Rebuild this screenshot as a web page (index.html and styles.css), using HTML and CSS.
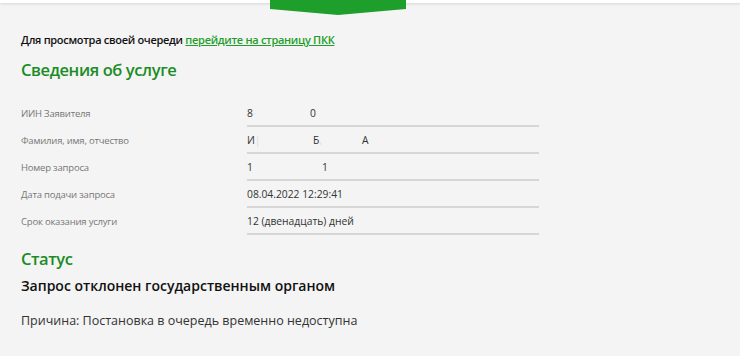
FILE: index.html
```html
<!DOCTYPE html>
<html lang="ru">
<head>
  <meta charset="UTF-8">
  <title>Сведения об услуге</title>
  <link rel="stylesheet" href="styles.css">
</head>
<body>

  <div class="top-bar">
    <div class="top-tab"></div>
  </div>

  <div class="content">
    <p class="queue-note">Для просмотра своей очереди <a href="#">перейдите на страницу ПКК</a></p>

    <h2>Сведения об услуге</h2>

    <div class="info-table">
      <div class="info-row">
        <div class="info-label">ИИН Заявителя</div>
        <div class="info-value"><span class="part w63">8<span class="mask">·</span></span><span>0</span></div>
      </div>
      <div class="info-row">
        <div class="info-label">Фамилия, имя, отчество</div>
        <div class="info-value"><span class="part w66">И<span class="mask">|</span></span><span class="part w49">Б<span class="mask">,</span></span><span>А</span></div>
      </div>
      <div class="info-row">
        <div class="info-label">Номер запроса</div>
        <div class="info-value"><span class="part w75">1</span><span>1</span></div>
      </div>
      <div class="info-row">
        <div class="info-label">Дата подачи запроса</div>
        <div class="info-value">08.04.2022 12:29:41</div>
      </div>
      <div class="info-row">
        <div class="info-label">Срок оказания услуги</div>
        <div class="info-value">12 (двенадцать) дней</div>
      </div>
    </div>

    <h2 class="status-title">Статус</h2>
    <p class="status-text">Запрос отклонен государственным органом</p>
    <p class="reason">Причина: Постановка в очередь временно недоступна</p>
  </div>

</body>
</html>
```

FILE: styles.css
```css
* {
  box-sizing: border-box;
}

body {
  background-color: #f4f4f4;
  font-family: 'Open Sans', 'Noto Sans', sans-serif;
  margin: 0;
  padding: 0;
  color: #222;
}

.top-bar {
  height: 3px;
  background-color: #fff;
  box-shadow: 0 1px 3px rgba(0, 0, 0, 0.12);
  position: relative;
}

.top-tab {
  position: absolute;
  top: 0;
  left: 270px;
  width: 136px;
  height: 15px;
  background-color: #1e9e2a;
  clip-path: polygon(0 0, 100% 0, 100% 60%, 50% 100%, 0 60%);
}

.content {
  padding: 29px 21px 0;
}

.queue-note {
  margin: 0;
  font-size: 11px;
  font-weight: 600;
  letter-spacing: -0.3px;
  color: #111;
}

.queue-note a {
  color: #1e9e2a;
}

h2 {
  margin: 11px 0 0;
  font-size: 16.5px;
  font-weight: 600;
  letter-spacing: -0.4px;
  color: #1a8c25;
}

.info-table {
  margin-top: 19px;
  width: 518px;
}

.info-row {
  display: flex;
  height: 27px;
}

.info-label {
  width: 226px;
  padding-top: 7px;
  font-size: 9.5px;
  letter-spacing: -0.2px;
  color: #777;
}

.info-value {
  flex: 1;
  display: flex;
  padding-top: 6px;
  font-size: 10.3px;
  color: #333;
  border-bottom: 2px solid #d6d6d6;
}

.part {
  display: inline-block;
}

.w63 { width: 63px; }
.w66 { width: 66px; }
.w49 { width: 49px; }
.w75 { width: 75px; }

.mask {
  color: #dcdcdc;
}

.status-title {
  margin-top: 12px;
}

.status-text {
  margin: 6px 0 0;
  font-size: 14px;
  font-weight: 600;
  color: #111;
}

.reason {
  margin: 17px 0 0;
  font-size: 12.5px;
  color: #333;
}
```
